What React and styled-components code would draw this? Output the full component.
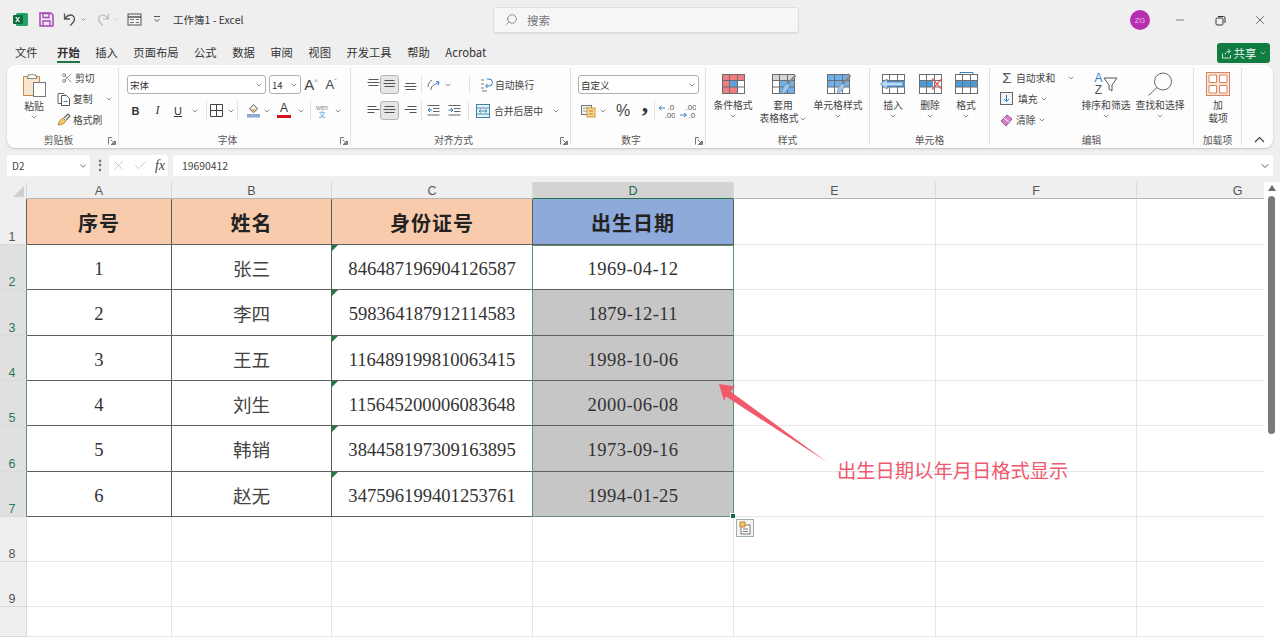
import React from "react";
import styled, { createGlobalStyle } from "styled-components";
import { ChevronDown, Minus, X, Check, Search, Scissors } from "lucide-react";

const UI = `"Noto Sans CJK SC", "Noto Sans", sans-serif`;
const SHEET = `"Liberation Serif", "Noto Sans CJK SC", serif`;

const GlobalStyle = createGlobalStyle`
  html, body { margin: 0; padding: 0; height: 100%; overflow: hidden; background: #efefef; }
  body { font-family: ${UI}; color: #333; }
`;

// ---- small drawings for the ribbon
const Svg = ({ s = 16, w, h, children }) => (
  <svg width={w || s} height={h || s} viewBox={`0 0 ${w || s} ${h || s}`} fill="none" style={{ display: "block", flex: "none" }}>
    {children}
  </svg>
);

const Chev = ({ s = 8, c = "#555" }) => <ChevronDown size={s} color={c} strokeWidth={2} style={{ flex: "none" }} />;

const Launcher = () => (
  <Svg s={8}>
    <path d="M.5 7.500V.5H4M7.500 4v3.500H3M2.500 2.500l4 4M6.500 3.800v2.700H3.800" stroke="#777" />
  </Svg>
);

const ExcelLogo = () => (
  <Svg s={15}>
    <rect x="3" y="1" width="12" height="13" rx="1.500" fill="#21a366" />
    <rect x="0" y="3" width="10" height="9" rx="1" fill="#0f6b3c" />
    <path d="M2.800 5l3.600 5M6.400 5l-3.600 5" stroke="#fff" strokeWidth="1.200" />
  </Svg>
);
const SaveIcon = () => (
  <Svg s={15}>
    <path d="M1 1h11l2 2v11H1z" stroke="#a645b5" strokeWidth="1.500" fill="#f1e4f3" />
    <path d="M4 1.500h6v4H4zM4 14V9h7v5" stroke="#a645b5" strokeWidth="1.300" />
  </Svg>
);
const UndoIcon = ({ c }) => (
  <Svg s={15}>
    <path d="M2.500 1.500v5.500H8M2.800 6.800C4.800 4 6.500 3 8.300 3c2.600 0 4.200 2 4.200 4.200 0 2.600-2 4-4.300 6.300" stroke={c} strokeWidth="1.300" />
  </Svg>
);
const RedoIcon = ({ c }) => (
  <Svg s={15}>
    <path d="M12.500 1.500v5.500H7M12.200 6.800C10.200 4 8.500 3 6.700 3 4.100 3 2.500 5 2.500 7.200c0 2.600 2 4 4.300 6.300" stroke={c} strokeWidth="1.200" />
  </Svg>
);
const FormIcon = () => (
  <Svg s={15}>
    <rect x="1" y="2" width="13" height="11" stroke="#555" />
    <path d="M1 5h13" stroke="#555" strokeWidth="1.500" />
    <path d="M3 7.500h4M9 7.500h3M3 10.500h4M9 10.500h3" stroke="#777" />
  </Svg>
);
const QuickDrop = () => (
  <Svg w={8} h={8}>
    <path d="M1 1.500h6M1.500 4l2.500 2.500L6.500 4" stroke="#555" />
  </Svg>
);
const RestoreIcon = () => (
  <Svg s={11}>
    <rect x="1" y="3" width="7" height="7" rx="1.200" stroke="#333" />
    <path d="M3 1.500h5.500a1.500 1.500 0 0 1 1.500 1.500v5" stroke="#333" />
  </Svg>
);
const ShareIcon = () => (
  <Svg s={11}>
    <path d="M1.500 5.500v4.500h8V7M4 6.500c.5-2 2-3.200 4.500-3.200M7 1l2.500 2.200L7 5.500" stroke="#dff0e6" strokeWidth=".9" />
  </Svg>
);
const PasteIcon = () => (
  <Svg w={24} h={25}>
    <path d="M1.500 4.500h16v19h-16z" fill="#f8e6d0" stroke="#c98a3c" />
    <path d="M6 4.500V3h2.500a2 2 0 0 1 3 0H14v1.500l1 2H5z" fill="#fff" stroke="#888" />
    <rect x="11.500" y="10.500" width="12" height="14" fill="#fff" stroke="#777" />
  </Svg>
);
const CopyIcon = () => (
  <Svg s={14}>
    <path d="M1 1.500h6l1 1M1 1.500v10h3" stroke="#666" />
    <path d="M4.500 3.500h5l3 3v7h-8z" fill="#fff" stroke="#555" />
    <path d="M6.500 9.500h4" stroke="#3b82c4" />
  </Svg>
);
const BrushIcon = () => (
  <Svg s={14}>
    <path d="M1 12c1-4 3-6 5-7l3 3c-1 2-4 4-8 4z" fill="#f0c96f" stroke="#a77a25" strokeWidth=".8" />
    <path d="M7 5l4-4 2 2-4 4" stroke="#666" strokeWidth="1.200" />
  </Svg>
);
const BordersIcon = () => (
  <Svg s={13}>
    <path d="M.5.500h12v12H.5zM6.500.500v12M.5 6.500h12" stroke="#444" />
  </Svg>
);
const FillIcon = () => (
  <Svg w={15} h={15}>
    <path d="M7.500 1.500L3.500 6l4 3.500L11.500 6z" stroke="#555" />
    <path d="M5 6h5l-2.500 2.500z" fill="#e9a93c" />
    <rect x="1" y="11" width="13" height="3.500" fill="#8fa9d6" />
  </Svg>
);
const FontColor = () => (
  <Wrapped>
    <LetterA>A</LetterA>
    <ColorBar />
  </Wrapped>
);
const Lines = ({ kind = "center", v }) => {
  const rows = { left: [9, 12, 7], center: [10, 12, 10], right: [9, 12, 7] }[kind];
  const ys = v === "top" ? [1.5, 4.5, 7.5] : v === "bottom" ? [5.5, 8.5, 11.5] : [2.5, 5.5, 8.5];
  return (
    <Svg w={13} h={13}>
      {ys.map((y, i) => {
        const l = rows[i];
        const x = kind === "left" ? 0.5 : kind === "right" ? 12.5 - l : (13 - l) / 2;
        return <path key={y} d={`M${x} ${y}h${l}`} stroke="#555" />;
      })}
    </Svg>
  );
};
const OrientIcon = () => (
  <Svg s={15}>
    <path d="M2 10c0-3 2-6 4-7M5 13c0-3 1-4 3-5" stroke="#666" />
    <path d="M8 8l5-3M13 5l-3-.5M13 5l-1 3" stroke="#3b82c4" />
  </Svg>
);
const IndentIcon = ({ flip }) => (
  <Svg s={13}>
    <path d="M.5 1.500h12M6 4.500h6.500M6 7.500h6.500M.5 11h12" stroke="#666" />
    <path d={flip ? "M.5 6h4M3 4l2 2-2 2" : "M5 6H1M3 4L1 6l2 2"} stroke="#2f79bd" />
  </Svg>
);
const WrapIcon = () => (
  <Svg s={14}>
    <path d="M2 2h3M2 6h3M2 10h3" stroke="#777" />
    <path d="M8 1h2a3 3 0 0 1 0 7H7M8.500 6L6.500 8l2 2" stroke="#2f79bd" />
    <path d="M3 13h5" stroke="#777" />
  </Svg>
);
const MergeIcon = () => (
  <Svg s={14}>
    <rect x=".5" y=".5" width="13" height="13" stroke="#3a86a8" fill="#e7f1f6" />
    <path d="M.5 4h13M.5 10h13M3 7h8M3 7l2-1.500M3 7l2 1.500M11 7L9 5.500M11 7L9 8.500" stroke="#3a86a8" strokeWidth=".9" />
  </Svg>
);
const FormatNum = () => (
  <Svg s={15}>
    <rect x=".5" y="2.500" width="10" height="9" fill="#f4f4f4" stroke="#777" />
    <path d="M2 5h7M2 8h7" stroke="#999" />
    <rect x="6" y="5" width="8" height="9" fill="#f7d99c" stroke="#d59a2a" />
    <path d="M8 8h4M8 11h4" stroke="#b37c15" />
  </Svg>
);
const DecAdd = ({ flip }) => (
  <Svg w={17} h={16}>
    {flip ? (
      <>
        <path d="M1 12h6M5 10l2.500 2L5 14" stroke="#3b82c4" />
        <Digits x="6.500" y="7" fill="#555">.00</Digits>
        <Digits x="9.500" y="15" fill="#555">.0</Digits>
      </>
    ) : (
      <>
        <path d="M7 5H1M3.500 3L1 5l2.500 2" stroke="#3b82c4" />
        <Digits x="9.500" y="7" fill="#555">.0</Digits>
        <Digits x="6.500" y="15" fill="#555">.00</Digits>
      </>
    )}
  </Svg>
);
const Grid3 = () => <path d="M2.500 8.500h22M2.500 15h22M9.500 2.500v19M17.500 2.500v19" stroke="#6d6d6d" />;
const Tbl = ({ children, over }) => (
  <Svg w={26} h={24}>
    <rect x="2.500" y="2.500" width="22" height="19" fill="#fff" stroke="#6d6d6d" />
    {children}
    <Grid3 />
    {over}
  </Svg>
);
const CondIcon = () => (
  <Tbl>
    <rect x="3" y="3" width="21" height="5" fill="#f27d82" />
    <rect x="3" y="9" width="6" height="6" fill="#f27d82" />
    <rect x="10" y="9" width="7" height="6" fill="#5ea2e2" />
    <rect x="3" y="15" width="14" height="6" fill="#f27d82" />
  </Tbl>
);
const Brush = () => (
  <>
    <path d="M25.500 3.500L17 13" stroke="#888" strokeWidth="2.200" />
    <path d="M17.500 11.500l2 2c-1 4-3.500 6.500-7.500 8.500 0-5 2-8.500 5.500-10.500z" fill="#9fc7ea" stroke="#6d8eaa" strokeWidth=".7" />
  </>
);
const TableStyle = () => (
  <Tbl over={<Brush />}>
    <rect x="3" y="3" width="21" height="5" fill="#d6d6d6" />
    <rect x="10" y="9" width="14" height="12" fill="#6fb0ea" />
  </Tbl>
);
const CellStyle = () => (
  <Tbl over={<Brush />}>
    <rect x="3" y="3" width="21" height="12" fill="#6fb0ea" />
  </Tbl>
);
const InsertIcon = () => (
  <Tbl over={<path d="M.5 12l6.500-5v3h16v4H7v3z" fill="#b9dcf4" stroke="#3b82c4" strokeWidth=".8" />}>
    <rect x="6" y="8.500" width="19" height="6.500" fill="#4b9ad8" />
  </Tbl>
);
const DeleteIcon = () => (
  <Tbl over={<path d="M15 6.500l10 11M25 6.500l-10 11" stroke="#e25a5a" strokeWidth="1.300" />}>
    <rect x="3" y="8.500" width="13" height="6.500" fill="#4b9ad8" />
  </Tbl>
);
const FormatIcon = () => (
  <Tbl over={<path d="M7 .5h13M7 .5v1.500M20 .5v1.500" stroke="#3b82c4" />}>
    <rect x="3" y="8.500" width="21" height="6.500" fill="#4b9ad8" />
  </Tbl>
);
const FillDown = () => (
  <Svg s={13}>
    <rect x=".5" y=".5" width="12" height="12" fill="#eef5fa" stroke="#666" />
    <path d="M6.500 3v6M4 7l2.500 2.500L9 7" stroke="#2f79bd" />
  </Svg>
);
const Eraser = () => (
  <Svg s={14}>
    <path d="M1 8l6-6 5 4-6 7z" fill="#d183c9" stroke="#a14f9c" />
    <path d="M4 5l5 4" stroke="#fff" />
  </Svg>
);
const SortIcon = () => (
  <SortWrap>
    <SortAZ>
      <SortA>A</SortA>
      <span>Z</span>
    </SortAZ>
    <Svg w={15} h={16}>
      <path d="M1 2h13L9 9v6l-3-2V9z" stroke="#555" />
    </Svg>
  </SortWrap>
);
const FindIcon = () => (
  <Svg w={26} h={24}>
    <circle cx="16" cy="9.500" r="8.500" stroke="#666" />
    <path d="M10 15.500L1.500 23.500" stroke="#666" />
  </Svg>
);
const AddinIcon = () => (
  <Svg s={24}>
    <rect x=".5" y=".5" width="23" height="23" fill="#fbe3d6" stroke="#d98564" />
    <path d="M3 3h7.500v7.500H3zM13.500 3H21v7.500h-7.500zM3 13.500h7.500V21H3zM13.500 13.500H21V21h-7.500z" fill="#fff" stroke="#d98564" />
  </Svg>
);
const CollapseIcon = () => (
  <Svg w={11} h={7}>
    <path d="M1 6l4.500-4.500L10 6" stroke="#444" strokeWidth="1.200" />
  </Svg>
);

// ---- grid data
const people = [
  ["1", "张三", "846487196904126587", "1969-04-12"],
  ["2", "李四", "598364187912114583", "1879-12-11"],
  ["3", "王五", "116489199810063415", "1998-10-06"],
  ["4", "刘生", "115645200006083648", "2000-06-08"],
  ["5", "韩销", "384458197309163895", "1973-09-16"],
  ["6", "赵无", "347596199401253761", "1994-01-25"],
];
const tabs = ["文件", "开始", "插入", "页面布局", "公式", "数据", "审阅", "视图", "开发工具", "帮助", "Acrobat"];
const heads = ["序号", "姓名", "身份证号", "出生日期"];
const columns = ["A", "B", "C", "D", "E", "F", "G"];
const rowHeights = [45, 46, 45, 45, 46, 45, 45, 45, 30];

export default function App() {
  return (
    <Page>
      <GlobalStyle />
      <TitleBar>
        <QuickTools>
          <ExcelLogo />
          <Gap $w={11} />
          <SaveIcon />
          <Gap $w={8} />
          <UndoIcon c="#555" />
          <Gap $w={3} />
          <Chev s={7} />
          <Gap $w={9} />
          <RedoIcon c="#bbb" />
          <Gap $w={1} />
          <Chev s={7} c="#bbb" />
          <Gap $w={8} />
          <FormIcon />
          <Gap $w={11} />
          <QuickDrop />
          <Gap $w={12} />
          <DocTitle>工作簿1 - Excel</DocTitle>
        </QuickTools>
        <SearchBox>
          <Search size={13} color="#666" strokeWidth={1.3} style={{ transform: "scaleX(-1)" }} />
          <span>搜索</span>
        </SearchBox>
        <WindowTools>
          <Avatar>ZG</Avatar>
          <WinBtn><Minus size={12} color="#333" strokeWidth={1.2} /></WinBtn>
          <WinBtn><RestoreIcon /></WinBtn>
          <WinBtn><X size={14} color="#333" strokeWidth={1.2} /></WinBtn>
        </WindowTools>
      </TitleBar>

      <TabRow>
        {tabs.map((t) => (
          <Tab key={t} $active={t === "开始"}>{t}</Tab>
        ))}
        <ShareBtn>
          <ShareIcon />
          共享
          <Chev s={8} c="#dff0e6" />
        </ShareBtn>
      </TabRow>

      <Ribbon>
        <Group $w={112}>
          <Body>
            <Gap $w={4} />
            <BigBtn $w={46}>
              <PasteIcon />
              <BigLabel>粘贴</BigLabel>
              <Chev />
            </BigBtn>
            <Stack>
              <StackRow><Gap $w={2} /><Scissors size={12} color="#555" strokeWidth={1.2} /><span>剪切</span></StackRow>
              <StackRow><CopyIcon /><span>复制</span><Gap $w={8} /><Chev /></StackRow>
              <StackRow><BrushIcon /><span>格式刷</span></StackRow>
            </Stack>
          </Body>
          <GroupLabel $pr={8}>剪贴板<LaunchSpot><Launcher /></LaunchSpot></GroupLabel>
        </Group>

        <Group $w={232}>
          <Rows>
            <ToolRow>
              <Gap $w={8} />
              <Select $w={139}>宋体<Chev /></Select>
              <Gap $w={3} />
              <Select $w={32}>14<Chev /></Select>
              <GrowA $size={15}>A<sup>^</sup></GrowA>
              <GrowA $size={13}>A<sup>ˇ</sup></GrowA>
            </ToolRow>
            <ToolRow>
              <Gap $w={11} />
              <Cell $w={11}><Bold>B</Bold></Cell>
              <Gap $w={11} />
              <Cell $w={11}><Italic>I</Italic></Cell>
              <Gap $w={9} />
              <Cell $w={12}><Under>U</Under></Cell>
              <Cell $w={22}><Chev /></Cell>
              <Divider />
              <Cell $w={18}><BordersIcon /></Cell>
              <Cell $w={12}><Chev /></Cell>
              <Divider />
              <Gap $w={3} />
              <Cell $w={24}><FillIcon /></Cell>
              <Cell $w={4}><Chev /></Cell>
              <Cell $w={30}><FontColor /></Cell>
              <Cell $w={4}><Chev /></Cell>
              <Gap $w={7} />
              <Divider />
              <Cell $w={22}><Wen><i>wén</i><b>文</b></Wen></Cell>
              <Cell $w={10}><Chev /></Cell>
            </ToolRow>
          </Rows>
          <GroupLabel $pr={14}>字体<LaunchSpot><Launcher /></LaunchSpot></GroupLabel>
        </Group>

        <Group $w={220}>
          <Rows>
            <ToolRow>
              <Gap $w={15} />
              <Cell $w={14}><Lines v="top" /></Cell>
              <Picked><Lines /></Picked>
              <Cell $w={22}><Lines v="bottom" /></Cell>
              <Divider />
              <Gap $w={1} />
              <Cell $w={20}><OrientIcon /></Cell>
              <Cell $w={10}><Chev /></Cell>
              <Gap $w={16} />
              <Divider />
              <Gap $w={9} />
              <WrapIcon />
              <TextBtn $m={2}>自动换行</TextBtn>
            </ToolRow>
            <ToolRow>
              <Gap $w={15} />
              <Cell $w={14}><Lines kind="left" /></Cell>
              <Picked><Lines /></Picked>
              <Cell $w={22}><Lines kind="right" /></Cell>
              <Divider />
              <Gap $w={1} />
              <Cell $w={20}><IndentIcon /></Cell>
              <Cell $w={22}><IndentIcon flip /></Cell>
              <Gap $w={3} />
              <Divider />
              <Gap $w={7} />
              <MergeIcon />
              <TextBtn $m={4}>合并后居中</TextBtn>
              <Gap $w={9} />
              <Chev />
            </ToolRow>
          </Rows>
          <GroupLabel $pr={14}>对齐方式<LaunchSpot><Launcher /></LaunchSpot></GroupLabel>
        </Group>

        <Group $w={135}>
          <Rows>
            <ToolRow>
              <Gap $w={7} />
              <Select $w={121}>自定义<Chev /></Select>
            </ToolRow>
            <ToolRow>
              <Gap $w={9} />
              <Cell $w={16}><FormatNum /></Cell>
              <Cell $w={14}><Chev /></Cell>
              <Cell $w={26}><Percent>%</Percent></Cell>
              <Cell $w={18}><Comma>,</Comma></Cell>
              <Divider />
              <Cell $w={22}><DecAdd /></Cell>
              <Cell $w={20}><DecAdd flip /></Cell>
            </ToolRow>
          </Rows>
          <GroupLabel $pr={14}>数字<LaunchSpot><Launcher /></LaunchSpot></GroupLabel>
        </Group>

        <Group $w={164}>
          <Body>
            <Gap $w={1} />
            <BigBtn $w={52}><CondIcon /><BigLabel>条件格式</BigLabel><Chev /></BigBtn>
            <BigBtn $w={48}><TableStyle /><BigLabel>套用<br />表格格式<Chev /></BigLabel></BigBtn>
            <BigBtn $w={62}><CellStyle /><BigLabel>单元格样式</BigLabel><Chev /></BigBtn>
          </Body>
          <GroupLabel>样式</GroupLabel>
        </Group>

        <Group $w={120}>
          <Body>
            <Gap $w={4} />
            <BigBtn $w={38}><InsertIcon /><BigLabel>插入</BigLabel><Chev /></BigBtn>
            <BigBtn $w={36}><DeleteIcon /><BigLabel>删除</BigLabel><Chev /></BigBtn>
            <BigBtn $w={36}><FormatIcon /><BigLabel>格式</BigLabel><Chev /></BigBtn>
          </Body>
          <GroupLabel>单元格</GroupLabel>
        </Group>

        <Group $w={204}>
          <Body>
            <Gap $w={10} />
            <Stack $w={79}>
              <StackRow><Sigma>Σ</Sigma><span>自动求和</span><Gap $w={8} /><Chev /></StackRow>
              <StackRow><FillDown /><Gap $w={1} /><span>填充</span><Chev /></StackRow>
              <StackRow><Eraser /><span>清除</span><Chev /></StackRow>
            </Stack>
            <BigBtn $w={54}><SortIcon /><BigLabel>排序和筛选</BigLabel><Chev /></BigBtn>
            <BigBtn $w={54}><FindIcon /><BigLabel>查找和选择</BigLabel><Chev /></BigBtn>
          </Body>
          <GroupLabel>编辑</GroupLabel>
        </Group>

        <Group $w={48}>
          <Body>
            <BigBtn $w={48}><AddinIcon /><BigLabel>加<br />载项</BigLabel></BigBtn>
          </Body>
          <GroupLabel>加载项</GroupLabel>
        </Group>
        <Collapse><CollapseIcon /></Collapse>
      </Ribbon>

      <FormulaBar>
        <NameBox>D2<Chev s={10} /></NameBox>
        <Dots>⋮</Dots>
        <FxBox>
          <X size={15} color="#bbb" strokeWidth={1.2} />
          <Check size={15} color="#bbb" strokeWidth={1.2} />
          <Fx>fx</Fx>
        </FxBox>
        <FormulaInput>19690412<Chev s={12} c="#555" /></FormulaInput>
      </FormulaBar>

      <SheetArea>
        <Sheet>
          <CornerCell><CornerMark /></CornerCell>
          {columns.map((c) => (
            <ColHead key={c} $on={c === "D"}>{c}</ColHead>
          ))}

          <RowHead $head>1</RowHead>
          {heads.map((h, i) => (
            <HeadCell key={h} $blue={i === 3}>{h}</HeadCell>
          ))}
          <EmptyCell /><EmptyCell /><EmptyCell />

          {rowHeights.map((_, r) => {
            const p = people[r];
            return (
              <React.Fragment key={r}>
                {/* row 10 is only a sliver at the bottom, its number falls below the window */}
                <RowHead $on={!!p}>{r + 2 < 10 ? r + 2 : ""}</RowHead>
                {p ? (
                  <>
                    <DataCell>{p[0]}</DataCell>
                    <DataCell $cjk>{p[1]}</DataCell>
                    <DataCell $flag>{p[2]}</DataCell>
                    <DataCell $grey={r > 0} $date>{p[3]}</DataCell>
                  </>
                ) : (
                  <><EmptyCell /><EmptyCell /><EmptyCell /><EmptyCell /></>
                )}
                <EmptyCell /><EmptyCell /><EmptyCell />
              </React.Fragment>
            );
          })}
          <Selection><Handle /></Selection>
          <PasteOptions>
            <Svg s={14}>
              <rect x="3" y="4" width="9" height="9" fill="#fff" stroke="#777" />
              <path d="M2 1h5v5H2z" fill="#f0c46a" stroke="#c48a2a" />
              <path d="M5 8h5M5 10.500h5" stroke="#777" />
            </Svg>
          </PasteOptions>
        </Sheet>
        <ScrollTrack>
          <ScrollArrow />
          <ScrollThumb />
        </ScrollTrack>
        <Arrow width="120" height="90" viewBox="0 0 120 90">
          <polygon points="1,1 17,3.500 12.500,8.500 109,79 8,13.500 6,18" fill="#f2596c" />
        </Arrow>
        <Callout>出生日期以年月日格式显示</Callout>
      </SheetArea>
    </Page>
  );
}

const Page = styled.div`
  width: 1280px;
  height: 637px;
  overflow: hidden;
  display: flex;
  flex-direction: column;
  background: #efefef;
`;
const Gap = styled.span`
  display: block;
  flex: none;
  width: ${(p) => p.$w}px;
`;

const TitleBar = styled.div`
  height: 40px;
  flex: none;
  display: flex;
  align-items: center;
  position: relative;
  padding-left: 13px;
`;
const QuickTools = styled.div`
  display: flex;
  align-items: center;
  width: 480px;
  padding-bottom: 2px;
`;
const DocTitle = styled.span`
  font-size: 10.500px;
  color: #333;
  white-space: nowrap;
`;
const SearchBox = styled.div`
  width: 306px;
  height: 26px;
  box-sizing: border-box;
  background: #f6f6f6;
  border: 1px solid #dedede;
  border-radius: 3px;
  box-shadow: 0 1px 1px rgba(0, 0, 0, 0.08);
  display: flex;
  align-items: center;
  gap: 9px;
  padding: 0 0 1px 11px;
  font-size: 11.500px;
  color: #777;
`;
const WindowTools = styled.div`
  display: flex;
  align-items: center;
  margin-left: auto;
`;
const Avatar = styled.div`
  width: 20px;
  height: 20px;
  border-radius: 50%;
  background: #b52fb0;
  color: #eebfeb;
  font: 7.500px "Liberation Sans", sans-serif;
  display: flex;
  align-items: center;
  justify-content: center;
  margin-right: 10px;
`;
const WinBtn = styled.div`
  width: 40px;
  display: flex;
  justify-content: center;
`;

const TabRow = styled.div`
  height: 25px;
  flex: none;
  display: flex;
  align-items: flex-start;
  padding-left: 15px;
  gap: 15.500px;
  position: relative;
`;
const Tab = styled.div`
  font-size: 11.300px;
  line-height: 25px;
  height: 23px;
  color: #333;
  font-weight: ${(p) => (p.$active ? 700 : 400)};
  box-shadow: ${(p) => (p.$active ? "inset 0 -2px 0 #217346" : "none")};
  white-space: nowrap;
  &:first-child { margin-right: 4px; }
`;
const ShareBtn = styled.div`
  margin-left: auto;
  margin-right: 10px;
  margin-top: 3px;
  width: 53px;
  height: 20px;
  border-radius: 3px;
  background: #107c41;
  color: #e9f5ee;
  font-size: 11.500px;
  display: flex;
  align-items: center;
  justify-content: center;
  gap: 2px;
`;

const Ribbon = styled.div`
  height: 83px;
  flex: none;
  margin: 0 7px;
  width: 1266px;
  box-sizing: border-box;
  background: #fdfdfd;
  border-radius: 8px;
  box-shadow: 0 1px 2px rgba(0, 0, 0, 0.18);
  display: flex;
  position: relative;
`;
const Group = styled.div`
  width: ${(p) => p.$w}px;
  flex: none;
  box-sizing: border-box;
  display: flex;
  flex-direction: column;
  border-right: 1px solid #dfdfdf;
  margin: 3px 0;
  height: 77px;
`;
const Body = styled.div`
  height: 64px;
  flex: none;
  display: flex;
  align-items: flex-start;
`;
const Rows = styled.div`
  height: 64px;
  flex: none;
  box-sizing: border-box;
  padding-top: 7px;
  display: flex;
  flex-direction: column;
  gap: 7px;
`;
const ToolRow = styled.div`
  height: 19px;
  display: flex;
  align-items: center;
  position: relative;
`;
const Cell = styled.div`
  width: ${(p) => p.$w}px;
  flex: none;
  display: flex;
  justify-content: center;
  align-items: center;
`;
const Picked = styled.div`
  width: 19px;
  height: 19px;
  flex: none;
  box-sizing: border-box;
  background: #e6e6e6;
  border: 1px solid #b4b4b4;
  border-radius: 3px;
  display: flex;
  align-items: center;
  justify-content: center;
`;
const Divider = styled.span`
  display: block;
  flex: none;
  width: 1px;
  height: 19px;
  background: #e2e2e2;
`;
const GroupLabel = styled.div`
  height: 13px;
  font-size: 9.800px;
  line-height: 16px;
  color: #555;
  text-align: center;
  position: relative;
  padding-right: ${(p) => p.$pr || 0}px;
`;
const LaunchSpot = styled.span`
  position: absolute;
  right: 2px;
  top: 5px;
`;
const BigBtn = styled.div`
  width: ${(p) => p.$w}px;
  flex: none;
  display: flex;
  flex-direction: column;
  align-items: center;
  padding-top: 4px;
`;
const BigLabel = styled.div`
  font-size: 9.800px;
  line-height: 13px;
  color: #444;
  text-align: center;
  white-space: nowrap;
  margin-top: 3px;
  svg { display: inline-block; vertical-align: middle; }
`;
const Stack = styled.div`
  display: flex;
  flex-direction: column;
  margin-top: -1px;
  ${(p) => p.$w && `width: ${p.$w}px;`}
`;
const StackRow = styled.div`
  height: 21px;
  display: flex;
  align-items: center;
  gap: 2px;
  font-size: 9.800px;
  color: #444;
  white-space: nowrap;
`;
const Select = styled.div`
  width: ${(p) => p.$w}px;
  height: 19px;
  flex: none;
  box-sizing: border-box;
  background: #fff;
  border: 1px solid #b0b0b0;
  border-radius: 3px;
  font-size: 9.500px;
  color: #333;
  display: flex;
  align-items: center;
  justify-content: space-between;
  padding: 0 2px;
`;
const GrowA = styled.div`
  width: 20px;
  flex: none;
  font: ${(p) => p.$size}px "Liberation Sans", sans-serif;
  color: #444;
  text-align: center;
  sup { font-size: 7px; line-height: 0; color: #3b82c4; }
`;
const Bold = styled.b`
  font: bold 11px "Liberation Sans", sans-serif;
  color: #333;
`;
const Italic = styled.i`
  font: italic 12px "Liberation Serif", serif;
  color: #333;
`;
const Under = styled.u`
  font: 11px "Liberation Sans", sans-serif;
  color: #333;
`;
const Wrapped = styled.div`
  display: flex;
  flex-direction: column;
  align-items: center;
  width: 14px;
`;
const LetterA = styled.span`
  font: 12px/11px "Liberation Sans", sans-serif;
  color: #333;
`;
const ColorBar = styled.span`
  display: block;
  width: 14px;
  height: 3px;
  margin-top: 1px;
  background: #d8121f;
`;
const Wen = styled.div`
  display: flex;
  flex-direction: column;
  align-items: center;
  i { font: 6.500px/7px "Liberation Sans", sans-serif; color: #888; }
  b { font-size: 7px; line-height: 7px; font-weight: 400; color: #5a9bd0; }
`;
const TextBtn = styled.span`
  font-size: 9.800px;
  color: #444;
  margin-left: ${(p) => p.$m}px;
  white-space: nowrap;
`;
const Percent = styled.span`
  font: 16px "Liberation Sans", sans-serif;
  color: #444;
`;
const Comma = styled.span`
  font: bold 26px/12px "Liberation Serif", serif;
  color: #333;
  position: relative;
  top: -7px;
`;
const Digits = styled.text`
  font: 8px "Liberation Sans", sans-serif;
`;
const Sigma = styled.span`
  font: 15px/15px "Liberation Sans", sans-serif;
  color: #555;
  width: 14px;
  text-align: center;
`;
const SortWrap = styled.div`
  display: flex;
  align-items: center;
  height: 24px;
`;
const SortAZ = styled.div`
  display: flex;
  flex-direction: column;
  align-items: center;
  font: 12px/12px "Liberation Sans", sans-serif;
  color: #555;
`;
const SortA = styled.span`
  color: #3b82c4;
`;
const Collapse = styled.div`
  flex: none;
  margin-left: 12px;
  margin-top: 71px;
  height: 7px;
`;

const FormulaBar = styled.div`
  height: 21px;
  flex: none;
  margin-top: 7px;
  padding-left: 7px;
  display: flex;
  align-items: stretch;
`;
const NameBox = styled.div`
  width: 83px;
  box-sizing: border-box;
  background: #fff;
  border-radius: 3px;
  font-size: 10px;
  color: #444;
  display: flex;
  align-items: center;
  justify-content: space-between;
  padding: 0 2px 0 5px;
`;
const Dots = styled.div`
  width: 19px;
  text-align: center;
  font: bold 12px/21px "Liberation Sans", sans-serif;
  color: #666;
`;
const FxBox = styled.div`
  width: 59px;
  background: #fff;
  border-radius: 3px;
  display: flex;
  align-items: center;
  justify-content: space-between;
  padding: 0 3px 0 2px;
  box-sizing: border-box;
`;
const Fx = styled.i`
  font: italic 14px "Liberation Serif", serif;
  color: #444;
`;
const FormulaInput = styled.div`
  margin-left: 5px;
  width: 1100px;
  box-sizing: border-box;
  background: #fff;
  border-radius: 3px;
  font-size: 10.400px;
  color: #444;
  display: flex;
  align-items: center;
  justify-content: space-between;
  padding: 0 2px 0 9px;
`;

const SheetArea = styled.div`
  margin-top: 6px;
  height: 455px;
  flex: none;
  position: relative;
  display: flex;
  background: #fff;
`;
const Sheet = styled.div`
  width: 1264px;
  flex: none;
  position: relative;
  overflow: hidden;
  display: grid;
  grid-template-columns: 27px 145px 160px 201px 201px 202px 201px 202px;
  grid-template-rows: 17px 46px ${rowHeights.join("px ")}px;
`;
const CornerCell = styled.div`
  background: #efefef;
  border-right: 1px solid #dadada;
  position: relative;
`;
const CornerMark = styled.span`
  position: absolute;
  right: 2px;
  bottom: 2px;
  border-left: 11px solid transparent;
  border-bottom: 11px solid #cfcfcf;
`;
const ColHead = styled.div`
  background: ${(p) => (p.$on ? "#d3d3d3" : "#efefef")};
  border-right: 1px solid #dadada;
  border-bottom: 1px solid ${(p) => (p.$on ? "#217346" : "#b5b5b5")};
  box-sizing: border-box;
  color: ${(p) => (p.$on ? "#1f6f46" : "#555")};
  font: 12.500px/19px "Liberation Sans", sans-serif;
  text-align: center;
`;
const RowHead = styled.div`
  background: ${(p) => (p.$on ? "#e0e0e0" : "#efefef")};
  box-sizing: border-box;
  color: ${(p) => (p.$on ? "#2a7a50" : "#555")};
  font: 12.500px/13px "Liberation Sans", sans-serif;
  display: flex;
  align-items: flex-end;
  justify-content: center;
  border-bottom: 1px solid #dadada;
  border-right: 1px solid ${(p) => (p.$on ? "#5f9279" : p.$head ? "#5e5e5e" : "#dadada")};
  padding-right: 2px;
`;
const HeadCell = styled.div`
  background: ${(p) => (p.$blue ? "#8eaadb" : "#f8cbad")};
  border-right: 1px solid #5e5e5e;
  border-bottom: 1px solid #5e5e5e;
  font: 700 20px ${SHEET};
  letter-spacing: 1px;
  color: #222;
  display: flex;
  align-items: center;
  justify-content: center;
  box-sizing: border-box;
  padding-top: 1px;
`;
const DataCell = styled.div`
  background: ${(p) => (p.$grey ? "#c6c6c6" : "#fff")};
  border-right: 1px solid #5e5e5e;
  border-bottom: 1px solid #5e5e5e;
  font: 18.600px ${SHEET};
  letter-spacing: ${(p) => (p.$date ? "0.4px" : "0")};
  color: ${(p) => (p.$cjk ? "#444" : "#333")};
  display: flex;
  align-items: center;
  justify-content: center;
  box-sizing: border-box;
  position: relative;
  padding-top: ${(p) => (p.$cjk ? 0 : 3)}px;
  ${(p) =>
    p.$flag &&
    `&::before {
      content: "";
      position: absolute;
      left: 0;
      top: 0;
      border-top: 6px solid #1d7a45;
      border-right: 6px solid transparent;
    }`}
`;
const EmptyCell = styled.div`
  background: #fff;
  border-right: 1px solid #e6e6e6;
  border-bottom: 1px solid #e6e6e6;
  box-sizing: border-box;
`;
const Selection = styled.div`
  position: absolute;
  left: 532px;
  top: 63px;
  width: 202px;
  height: 272px;
  box-sizing: border-box;
  border: 1.500px solid #5f9279;
  pointer-events: none;
`;
const Handle = styled.span`
  position: absolute;
  right: -3px;
  bottom: -3px;
  width: 4px;
  height: 4px;
  background: #1d6b44;
  border: 1px solid #fff;
`;
const PasteOptions = styled.div`
  position: absolute;
  left: 736px;
  top: 337px;
  width: 18px;
  height: 18px;
  box-sizing: border-box;
  border: 1px solid #9fb0a8;
  background: #f3f3f3;
  display: flex;
  align-items: center;
  justify-content: center;
`;
const ScrollTrack = styled.div`
  flex: 1;
  position: relative;
  background: #fff;
`;
const ScrollArrow = styled.span`
  position: absolute;
  left: 4px;
  top: 3px;
  border-left: 4px solid transparent;
  border-right: 4px solid transparent;
  border-bottom: 6px solid #6e6e6e;
`;
const ScrollThumb = styled.div`
  position: absolute;
  left: 4px;
  top: 14px;
  width: 7px;
  height: 238px;
  border-radius: 4px;
  background: #7a7a7a;
`;
const Arrow = styled.svg`
  position: absolute;
  left: 718px;
  top: 201px;
`;
const Callout = styled.div`
  position: absolute;
  left: 837px;
  top: 274px;
  font-size: 19.300px;
  line-height: 28px;
  color: #f0596e;
  white-space: nowrap;
`;
